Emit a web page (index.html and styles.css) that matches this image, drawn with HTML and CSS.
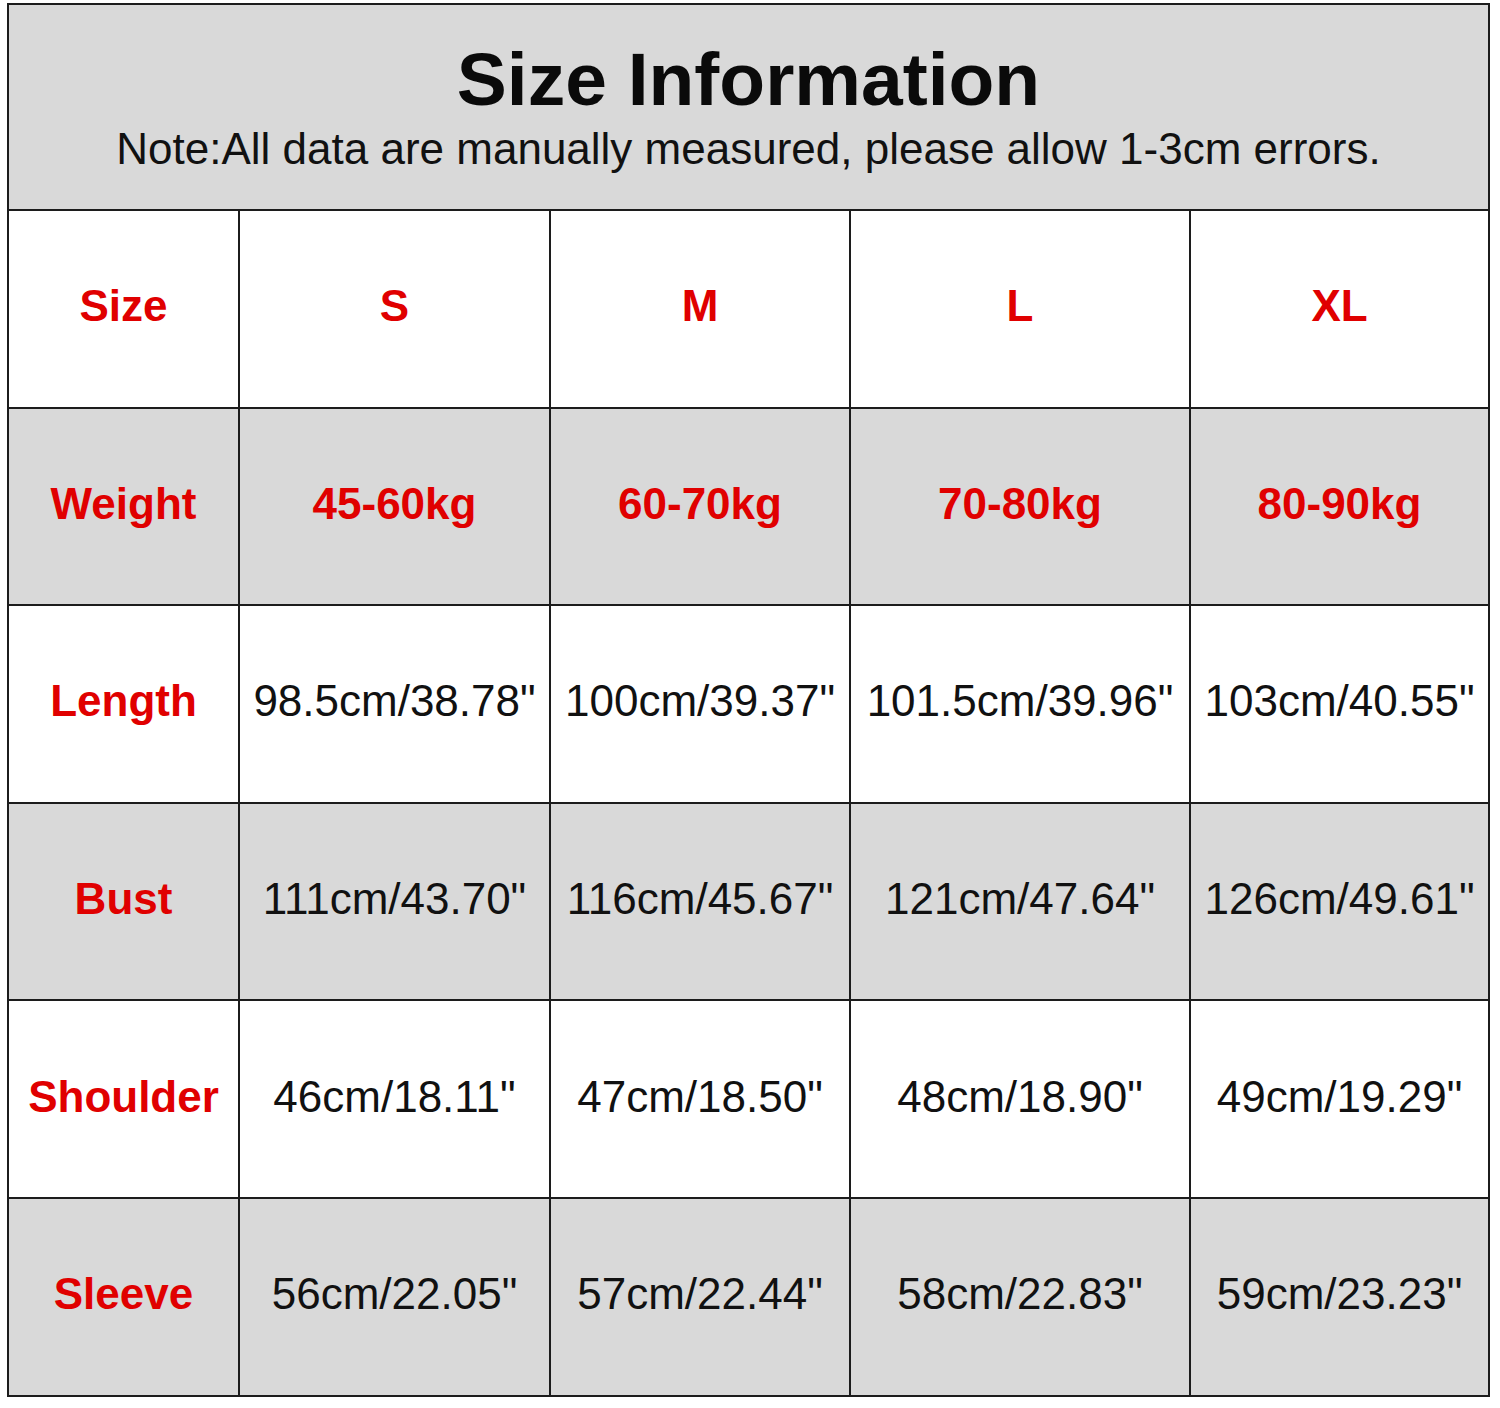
FILE: index.html
```html
<!DOCTYPE html>
<html lang="en">
<head>
<meta charset="utf-8">
<title>Size Information</title>
<link rel="stylesheet" href="styles.css">
</head>
<body>
<div class="chart">
  <div class="head">
    <h1 class="title">Size Information</h1>
    <p class="note">Note:All data are manually measured, please allow 1-3cm errors.</p>
  </div>
  <div class="grid">
    <div class="cell lbl">Size</div>
    <div class="cell lbl">S</div>
    <div class="cell lbl">M</div>
    <div class="cell lbl">L</div>
    <div class="cell lbl">XL</div>

    <div class="cell lbl alt">Weight</div>
    <div class="cell lbl alt">45-60kg</div>
    <div class="cell lbl alt">60-70kg</div>
    <div class="cell lbl alt">70-80kg</div>
    <div class="cell lbl alt">80-90kg</div>

    <div class="cell lbl">Length</div>
    <div class="cell val">98.5cm/38.78"</div>
    <div class="cell val">100cm/39.37"</div>
    <div class="cell val">101.5cm/39.96"</div>
    <div class="cell val">103cm/40.55"</div>

    <div class="cell lbl alt">Bust</div>
    <div class="cell val alt">111cm/43.70"</div>
    <div class="cell val alt">116cm/45.67"</div>
    <div class="cell val alt">121cm/47.64"</div>
    <div class="cell val alt">126cm/49.61"</div>

    <div class="cell lbl">Shoulder</div>
    <div class="cell val">46cm/18.11"</div>
    <div class="cell val">47cm/18.50"</div>
    <div class="cell val">48cm/18.90"</div>
    <div class="cell val">49cm/19.29"</div>

    <div class="cell lbl alt">Sleeve</div>
    <div class="cell val alt">56cm/22.05"</div>
    <div class="cell val alt">57cm/22.44"</div>
    <div class="cell val alt">58cm/22.83"</div>
    <div class="cell val alt">59cm/23.23"</div>
  </div>
</div>
</body>
</html>
```
FILE: styles.css
```css
html, body {
  margin: 0;
  padding: 0;
  background: #ffffff;
}
body {
  font-family: "Liberation Sans", Arial, sans-serif;
  color: #111111;
}
.chart {
  margin: 3px 0 0 7px;
  width: 1483px;
  box-sizing: border-box;
  border-top: 2px solid #1c1c1c;
  border-left: 2px solid #1c1c1c;
}
.head {
  height: 206px;
  box-sizing: border-box;
  background: #d9d9d9;
  border-right: 2px solid #1c1c1c;
  border-bottom: 2px solid #1c1c1c;
  display: flex;
  flex-direction: column;
  align-items: center;
  padding-top: 37px;
}
.title {
  margin: 0;
  font-size: 75px;
  font-weight: bold;
  line-height: 75px;
  color: #0a0a0a;
}
.note {
  margin: 7px 0 0 0;
  font-size: 44px;
  line-height: 50px;
  color: #111111;
}
.grid {
  display: grid;
  grid-template-columns: 231px 311px 300px 340px 299px;
  grid-auto-rows: 197.6px;
}
.cell {
  box-sizing: border-box;
  border-right: 2px solid #1c1c1c;
  border-bottom: 2px solid #1c1c1c;
  display: flex;
  align-items: center;
  justify-content: center;
  padding-bottom: 5px;
  font-size: 44px;
  white-space: nowrap;
  background: #ffffff;
}
.alt {
  background: #d9d9d9;
}
.lbl {
  color: #e00000;
  font-weight: bold;
}
.val {
  color: #111111;
}
```
